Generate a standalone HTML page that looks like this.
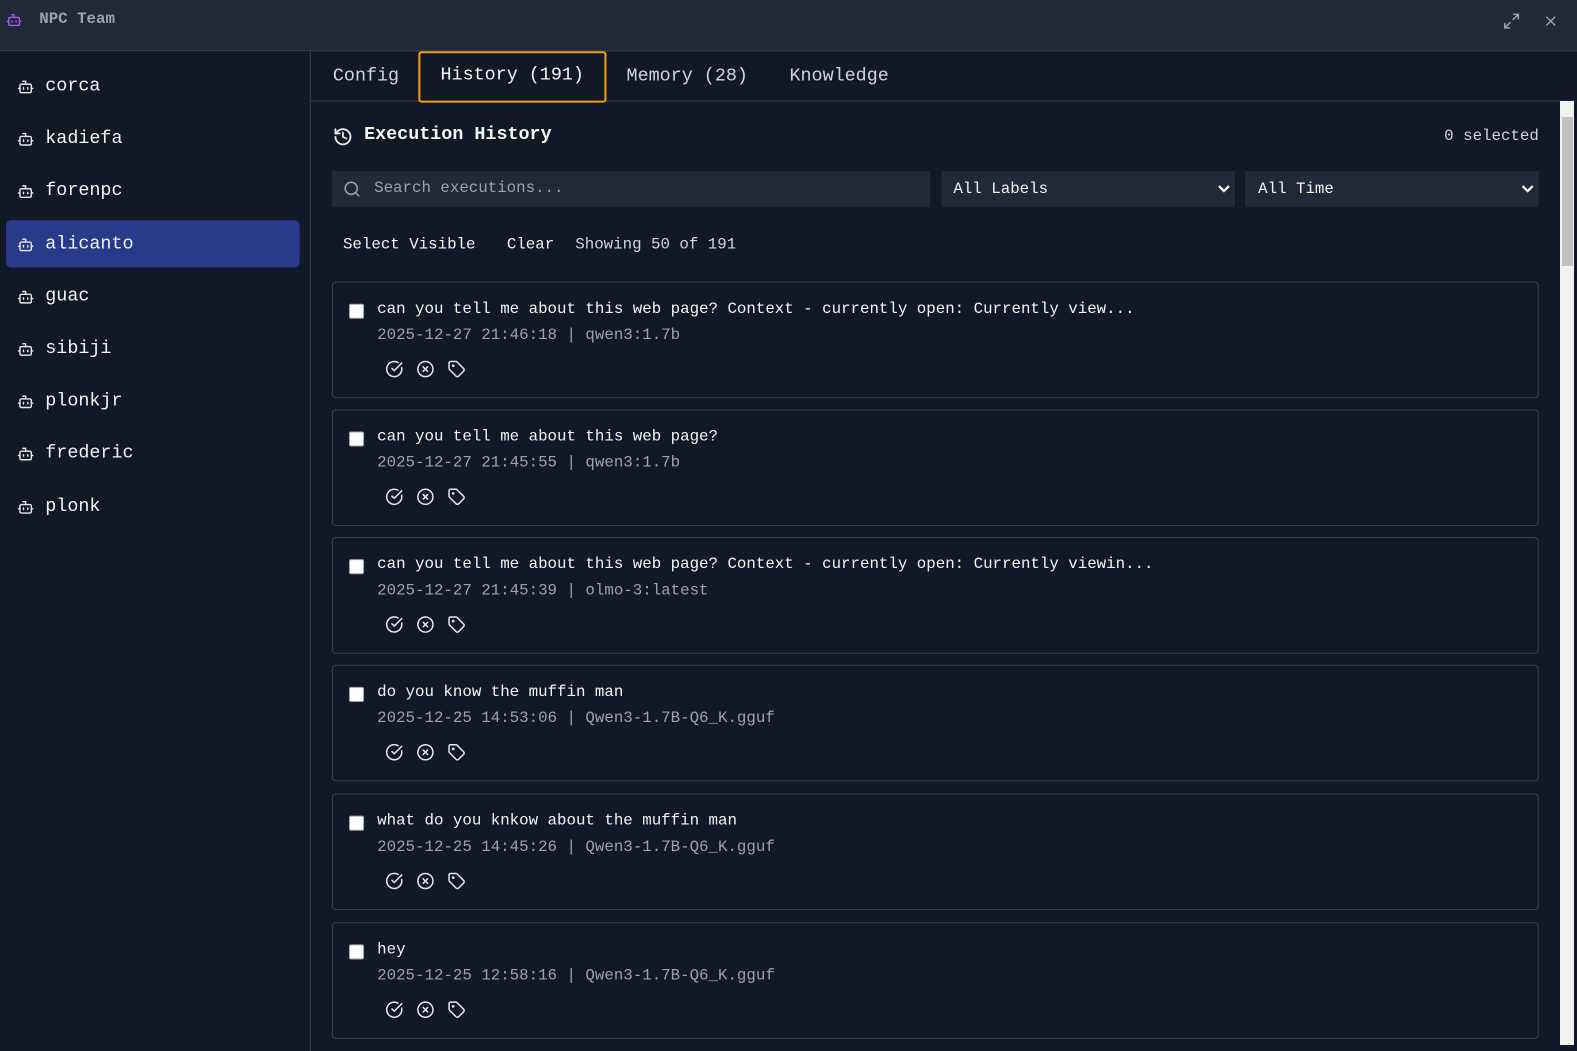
<!DOCTYPE html>
<html><head><meta charset="utf-8"><style>
*{box-sizing:border-box;margin:0;padding:0}
body{width:1577px;height:1045px;background:#111827;font-family:"Liberation Mono",monospace;color:#e5e7eb;position:relative;overflow:hidden}
#w{position:absolute;left:0;top:0;width:1568px;height:1040px;transform:scale(1.0057);transform-origin:0 0}
.a{position:absolute;white-space:nowrap}
.top{left:0;top:0;width:1577px;height:51px;background:#1f2937;border-bottom:1px solid #374151}
.side{left:0;top:51px;width:309px;height:994px;background:#111827;border-right:1px solid #374151}
.nm{font-size:18.3px;color:#f3f4f6}
.tabs{left:309px;top:51px;width:1258px;height:50px;border-bottom:1px solid #374151}
.tab{font-size:18.3px;color:#d1d5db}
.card{position:absolute;left:330px;width:1200px;height:116px;border:1px solid #374151;border-radius:4px;background:#111827}
.card .cb{position:absolute;left:16px;top:21px;width:15px;height:15px;background:#fff;border:1px solid #9ca3af;border-radius:2px}
.card .t{position:absolute;left:44px;top:17px;font-size:15.7px;color:#f3f4f6;white-space:nowrap}
.card .m{position:absolute;left:44px;top:43px;font-size:15.7px;color:#9ca3af;white-space:nowrap}
.card svg{position:absolute;top:77px}
</style></head><body>
<div id="w">
<div class="a top"></div>
<svg class="a" style="left:6px;top:12px" width="16" height="16" viewBox="0 0 24 24" fill="none" stroke="#a855f7" stroke-width="2" stroke-linecap="round" stroke-linejoin="round"><path d="M12 8V4H8"/><rect x="4" y="8" width="16" height="12" rx="2"/><path d="M2 14h2M20 14h2M15 13v2M9 13v2"/></svg>
<div class="a" style="left:39px;top:10px;font-size:15.7px;font-weight:bold;color:#9ca3af">NPC Team</div>
<svg class="a" style="left:1494px;top:12px" width="18" height="18" viewBox="0 0 24 24" fill="none" stroke="#9ca3af" stroke-width="2" stroke-linecap="round"><path d="M15 3h6v6M21 3l-7 7M9 21H3v-6M3 21l7-7"/></svg>
<svg class="a" style="left:1534px;top:13px" width="16" height="16" viewBox="0 0 24 24" fill="none" stroke="#9ca3af" stroke-width="2" stroke-linecap="round"><path d="M18 6L6 18M6 6l12 12"/></svg>
<div class="a side"></div>
<div class="a" style="left:6px;top:219px;width:292px;height:47px;background:#2a3a8a;border-radius:5px"></div>
<div class="a tabs"></div>
<div class="a" style="left:416px;top:51px;width:187px;height:51px;border:2px solid #f59e0b;border-radius:3px;background:#111827"></div>
<div class="a tab" style="left:331px;top:66px">Config</div>
<div class="a tab" style="left:438px;top:65px;color:#f3f4f6">History (191)</div>
<div class="a tab" style="left:623px;top:66px">Memory (28)</div>
<div class="a tab" style="left:785px;top:66px">Knowledge</div>
<svg class="a" style="left:331px;top:126px" width="20" height="20" viewBox="0 0 24 24" fill="none" stroke="#e5e7eb" stroke-width="2.2" stroke-linecap="round" stroke-linejoin="round"><path d="M3 12a9 9 0 1 0 9-9 9.75 9.75 0 0 0-6.74 2.74L3 8"/><path d="M3 3v5h5M12 7v5l4 2"/></svg>
<div class="a" style="left:362px;top:124px;font-size:18.3px;font-weight:bold;color:#f3f4f6">Execution History</div>
<div class="a" style="left:1436px;top:126px;font-size:15.7px;color:#d1d5db">0 selected</div>
<div class="a" style="left:330px;top:170px;width:595px;height:36px;background:#1f2937"></div>
<svg class="a" style="left:341px;top:179px" width="18" height="18" viewBox="0 0 24 24" fill="none" stroke="#9ca3af" stroke-width="2" stroke-linecap="round"><circle cx="11" cy="11" r="8"/><path d="M21 21l-4.3-4.3"/></svg>
<div class="a" style="left:372px;top:178px;font-size:15.7px;color:#9ca3af">Search executions...</div>
<div class="a" style="left:936px;top:170px;width:292px;height:36px;background:#1f2937"></div>
<div class="a" style="left:948px;top:179px;font-size:15.7px;color:#f3f4f6">All Labels</div>
<div class="a" style="left:1238px;top:170px;width:292px;height:36px;background:#1f2937"></div>
<div class="a" style="left:1251px;top:179px;font-size:15.7px;color:#f3f4f6">All Time</div>
<svg class="a" style="left:1210px;top:182px" width="14" height="12" viewBox="0 0 14 12" fill="none" stroke="#fff" stroke-width="2.2"><path d="M2 3l5 5 5-5"/></svg>
<svg class="a" style="left:1512px;top:182px" width="14" height="12" viewBox="0 0 14 12" fill="none" stroke="#fff" stroke-width="2.2"><path d="M2 3l5 5 5-5"/></svg>
<div class="a" style="left:341px;top:234px;font-size:15.7px;color:#f3f4f6">Select Visible</div>
<div class="a" style="left:504px;top:234px;font-size:15.7px;color:#f3f4f6">Clear</div>
<div class="a" style="left:572px;top:234px;font-size:15.7px;color:#d1d5db">Showing 50 of 191</div>
<div id="s"></div><div id="c"></div>
</div>
<div class="a" style="left:1560px;top:101px;width:14px;height:944px;background:#f1f1f1"></div>
<div class="a" style="left:1562px;top:117px;width:11px;height:149px;background:#c1c1c1"></div>
<div class="a" style="left:1574px;top:101px;width:3px;height:944px;background:#111827"></div>
<script>
var names=["corca","kadiefa","forenpc","alicanto","guac","sibiji","plonkjr","frederic","plonk"],h="";
names.forEach(function(n,i){var y=75+i*52.2;
h+='<svg class="a" style="left:17px;top:'+(y+3)+'px" width="17" height="17" viewBox="0 0 24 24" fill="none" stroke="#e5e7eb" stroke-width="2" stroke-linecap="round" stroke-linejoin="round"><path d="M12 8V4H8"/><rect x="4" y="8" width="16" height="12" rx="2"/><path d="M2 14h2M20 14h2M15 13v2M9 13v2"/></svg><div class="a nm" style="left:45px;top:'+(y+1)+'px">'+n+'</div>';});
document.getElementById("s").innerHTML=h;
var cs=[["can you tell me about this web page? Context - currently open: Currently view...","2025-12-27 21:46:18 | qwen3:1.7b"],["can you tell me about this web page?","2025-12-27 21:45:55 | qwen3:1.7b"],["can you tell me about this web page? Context - currently open: Currently viewin...","2025-12-27 21:45:39 | olmo-3:latest"],["do you know the muffin man","2025-12-25 14:53:06 | Qwen3-1.7B-Q6_K.gguf"],["what do you knkow about the muffin man","2025-12-25 14:45:26 | Qwen3-1.7B-Q6_K.gguf"],["hey","2025-12-25 12:58:16 | Qwen3-1.7B-Q6_K.gguf"]];
var tops=[280,407,534,661,789,917];h="";
var ic='stroke="#e5e7eb" stroke-width="2" fill="none" stroke-linecap="round" stroke-linejoin="round"';
cs.forEach(function(c,i){h+='<div class="card" style="top:'+tops[i]+'px"><div class="cb"></div><div class="t">'+c[0]+'</div><div class="m">'+c[1]+'</div>'+
'<svg style="left:52px" width="18" height="18" viewBox="0 0 24 24" '+ic+'><path d="M21.8 10A10 10 0 1 1 17 3.3"/><path d="M9 11l3 3L22 4"/></svg>'+
'<svg style="left:83px" width="18" height="18" viewBox="0 0 24 24" '+ic+'><circle cx="12" cy="12" r="10"/><path d="M15 9l-6 6M9 9l6 6"/></svg>'+
'<svg style="left:114px" width="18" height="18" viewBox="0 0 24 24" '+ic+'><path d="M12.6 2.6A2 2 0 0 0 11.2 2H4a2 2 0 0 0-2 2v7.2a2 2 0 0 0 .6 1.4l8.7 8.7a2.4 2.4 0 0 0 3.4 0l6.6-6.6a2.4 2.4 0 0 0 0-3.4z"/><circle cx="7.5" cy="7.5" r=".8"/></svg></div>';});
document.getElementById("c").innerHTML=h;
</script>
</body></html>
